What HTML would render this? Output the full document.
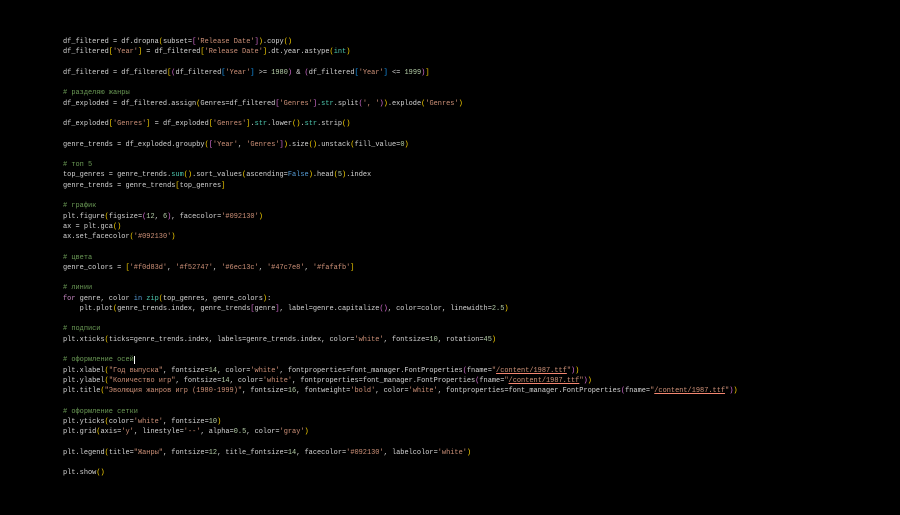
<!DOCTYPE html>
<html><head><meta charset="utf-8"><style>
html,body{margin:0;padding:0;background:#000;width:900px;height:515px;overflow:hidden}
pre{position:absolute;left:63px;top:37px;margin:0;font-family:"Liberation Mono","DejaVu Sans Mono",monospace;font-size:6.94px;line-height:10.26px;color:#d4d4d4;white-space:pre}
.s{color:#ce9178}.y{color:#ffd700}.p{color:#da70d6}.b{color:#179fff}.c{color:#6a9955}.n{color:#b5cea8}.k{color:#569cd6}.f{color:#c586c0}.t{color:#4ec9b0}
.u{color:#ce9178;text-decoration:underline;text-decoration-color:#f48771}
.cur{border-right:1px solid #fff}
</style></head><body><pre>df_filtered = df.dropna<span class="y">(</span>subset=<span class="p">[</span><span class="s">'Release Date'</span><span class="p">]</span><span class="y">)</span>.copy<span class="y">()</span>
df_filtered<span class="y">[</span><span class="s">'Year'</span><span class="y">]</span> = df_filtered<span class="y">[</span><span class="s">'Release Date'</span><span class="y">]</span>.dt.year.astype<span class="y">(</span><span class="t">int</span><span class="y">)</span>

df_filtered = df_filtered<span class="y">[</span><span class="p">(</span>df_filtered<span class="b">[</span><span class="s">'Year'</span><span class="b">]</span> &gt;= <span class="n">1980</span><span class="p">)</span> &amp; <span class="p">(</span>df_filtered<span class="b">[</span><span class="s">'Year'</span><span class="b">]</span> &lt;= <span class="n">1999</span><span class="p">)</span><span class="y">]</span>

<span class="c"># разделяю жанры</span>
df_exploded = df_filtered.assign<span class="y">(</span>Genres=df_filtered<span class="p">[</span><span class="s">'Genres'</span><span class="p">]</span>.<span class="t">str</span>.split<span class="p">(</span><span class="s">', '</span><span class="p">)</span><span class="y">)</span>.explode<span class="y">(</span><span class="s">'Genres'</span><span class="y">)</span>

df_exploded<span class="y">[</span><span class="s">'Genres'</span><span class="y">]</span> = df_exploded<span class="y">[</span><span class="s">'Genres'</span><span class="y">]</span>.<span class="t">str</span>.lower<span class="y">()</span>.<span class="t">str</span>.strip<span class="y">()</span>

genre_trends = df_exploded.groupby<span class="y">(</span><span class="p">[</span><span class="s">'Year'</span>, <span class="s">'Genres'</span><span class="p">]</span><span class="y">)</span>.size<span class="y">()</span>.unstack<span class="y">(</span>fill_value=<span class="n">0</span><span class="y">)</span>

<span class="c"># топ 5</span>
top_genres = genre_trends.<span class="t">sum</span><span class="y">()</span>.sort_values<span class="y">(</span>ascending=<span class="k">False</span><span class="y">)</span>.head<span class="y">(</span><span class="n">5</span><span class="y">)</span>.index
genre_trends = genre_trends<span class="y">[</span>top_genres<span class="y">]</span>

<span class="c"># график</span>
plt.figure<span class="y">(</span>figsize=<span class="p">(</span><span class="n">12</span>, <span class="n">6</span><span class="p">)</span>, facecolor=<span class="s">'#092130'</span><span class="y">)</span>
ax = plt.gca<span class="y">()</span>
ax.set_facecolor<span class="y">(</span><span class="s">'#092130'</span><span class="y">)</span>

<span class="c"># цвета</span>
genre_colors = <span class="y">[</span><span class="s">'#f0d83d'</span>, <span class="s">'#f52747'</span>, <span class="s">'#6ec13c'</span>, <span class="s">'#47c7e8'</span>, <span class="s">'#fafafb'</span><span class="y">]</span>

<span class="c"># линии</span>
<span class="f">for</span> genre, color <span class="k">in</span> <span class="t">zip</span><span class="y">(</span>top_genres, genre_colors<span class="y">)</span>:
    plt.plot<span class="y">(</span>genre_trends.index, genre_trends<span class="p">[</span>genre<span class="p">]</span>, label=genre.capitalize<span class="p">()</span>, color=color, linewidth=<span class="n">2.5</span><span class="y">)</span>

<span class="c"># подписи</span>
plt.xticks<span class="y">(</span>ticks=genre_trends.index, labels=genre_trends.index, color=<span class="s">'white'</span>, fontsize=<span class="n">10</span>, rotation=<span class="n">45</span><span class="y">)</span>

<span class="c"># оформление осей</span><span class="cur"></span>
plt.xlabel<span class="y">(</span><span class="s">"Год выпуска"</span>, fontsize=<span class="n">14</span>, color=<span class="s">'white'</span>, fontproperties=font_manager.FontProperties<span class="p">(</span>fname=<span class="s">"</span><span class="u">/content/1987.ttf</span><span class="s">"</span><span class="p">)</span><span class="y">)</span>
plt.ylabel<span class="y">(</span><span class="s">"Количество игр"</span>, fontsize=<span class="n">14</span>, color=<span class="s">'white'</span>, fontproperties=font_manager.FontProperties<span class="p">(</span>fname=<span class="s">"</span><span class="u">/content/1987.ttf</span><span class="s">"</span><span class="p">)</span><span class="y">)</span>
plt.title<span class="y">(</span><span class="s">"Эволюция жанров игр (1980-1999)"</span>, fontsize=<span class="n">16</span>, fontweight=<span class="s">'bold'</span>, color=<span class="s">'white'</span>, fontproperties=font_manager.FontProperties<span class="p">(</span>fname=<span class="s">"</span><span class="u">/content/1987.ttf</span><span class="s">"</span><span class="p">)</span><span class="y">)</span>

<span class="c"># оформление сетки</span>
plt.yticks<span class="y">(</span>color=<span class="s">'white'</span>, fontsize=<span class="n">10</span><span class="y">)</span>
plt.grid<span class="y">(</span>axis=<span class="s">'y'</span>, linestyle=<span class="s">'--'</span>, alpha=<span class="n">0.5</span>, color=<span class="s">'gray'</span><span class="y">)</span>

plt.legend<span class="y">(</span>title=<span class="s">"Жанры"</span>, fontsize=<span class="n">12</span>, title_fontsize=<span class="n">14</span>, facecolor=<span class="s">'#092130'</span>, labelcolor=<span class="s">'white'</span><span class="y">)</span>

plt.show<span class="y">()</span></pre></body></html>
